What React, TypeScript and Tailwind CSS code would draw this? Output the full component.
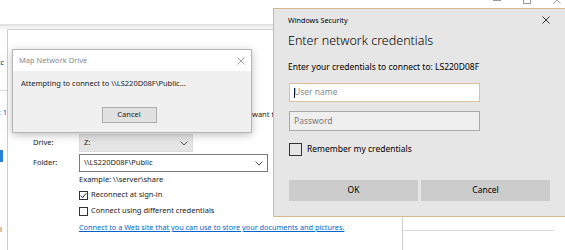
import React from 'react';

const font = { fontFamily: '"Noto Sans", "Open Sans", sans-serif' };

const Chevron = () => (
    <svg width="8" height="5" viewBox="0 0 8 5" className="shrink-0">
        <path d="M0.5 0.5 L4 4 L7.5 0.5" fill="none" stroke="#555" strokeWidth="1" />
    </svg>
);

const CheckBox = ({ checked }: { checked?: boolean }) => (
    <span className="w-[9px] h-[9px] border border-[#333] bg-white flex items-center justify-center shrink-0">
        {checked && (
            <svg width="7" height="7" viewBox="0 0 7 7">
                <path d="M0.8 3.6 L2.7 5.5 L6.2 1.2" fill="none" stroke="#222" strokeWidth="1" />
            </svg>
        )}
    </span>
);

const MapDriveWindow = () => (
    <div className="absolute left-[7px] top-[29px] w-[396px] h-[240px] bg-white border border-[#cfcfcf] text-[7.5px] text-[#1a1a1a]">
        <div className="mt-[79px] ml-[244px] w-[22px] overflow-hidden whitespace-nowrap leading-[10px]">want to</div>
        <div className="flex flex-col pl-[25px] pt-[15px]">
            <div className="flex items-center h-[18px]">
                <span className="w-[46px]">Drive:</span>
                <div className="w-[114px] h-[18px] bg-[#e5e5e5] border border-[#dcdcdc] flex items-center justify-between px-[4px]">
                    <span>Z:</span>
                    <Chevron />
                </div>
            </div>
            <div className="flex items-center h-[18px] mt-[2px]">
                <span className="w-[46px]">Folder:</span>
                <div className="w-[189px] h-[18px] bg-white border border-[#7a7a7a] flex items-center justify-between px-[4px]">
                    <span>\\LS220D08F\Public</span>
                    <Chevron />
                </div>
            </div>
            <div className="pl-[46px] mt-[1px] flex flex-col gap-[4px]">
                <span className="h-[12px] leading-[12px]">Example: \\server\share</span>
                <label className="flex items-center gap-[3px] h-[12px]">
                    <CheckBox checked />
                    <span>Reconnect at sign-in</span>
                </label>
                <label className="flex items-center gap-[3px] h-[12px]">
                    <CheckBox />
                    <span>Connect using different credentials</span>
                </label>
                <a className="text-[#0066cc] underline whitespace-nowrap h-[12px] leading-[12px] text-[7.3px]">
                    Connect to a Web site that you can use to store your documents and pictures.
                </a>
            </div>
        </div>
    </div>
);

const ProgressDialog = () => (
    <div className="absolute left-[12px] top-[49px] w-[240px] h-[84px] bg-[#f0f0f0] border border-[#b5b5b5] shadow-[0_2px_8px_rgba(0,0,0,0.25)] flex flex-col text-[7.5px]">
        <div className="h-[21px] bg-white flex items-center justify-between pl-[6px] pr-[6px] text-[#8a8a8a]">
            <span>Map Network Drive</span>
            <svg width="8" height="8" viewBox="0 0 8 8">
                <path d="M0.5 0.5 L7.5 7.5 M7.5 0.5 L0.5 7.5" stroke="#999" strokeWidth="0.9" />
            </svg>
        </div>
        <div className="pl-[8px] pt-[7px] text-[#1a1a1a] whitespace-nowrap leading-[10px]">
            Attempting to connect to \\LS220D08F\Public...
        </div>
        <div className="flex justify-center mt-[19px] pr-[6px]">
            <button className="w-[55px] h-[16px] bg-[#e1e1e1] border border-[#adadad] text-[7.5px] text-[#1a1a1a]">
                Cancel
            </button>
        </div>
    </div>
);

const SecurityDialog = () => (
    <div className="absolute left-[273px] top-[8px] w-[300px] h-[209px] bg-[#e6e6e6] border border-[#d8b88c] text-black">
        <div className="flex items-center justify-between h-[22px] pl-[14px] pr-[22px] text-[7.2px]">
            <span>Windows Security</span>
            <svg width="8" height="8" viewBox="0 0 8 8">
                <path d="M0.5 0.5 L7.5 7.5 M7.5 0.5 L0.5 7.5" stroke="#222" strokeWidth="0.9" />
            </svg>
        </div>
        <div className="pl-[14px] text-[12.5px] font-light leading-[20px]">Enter network credentials</div>
        <div className="pl-[14px] text-[8.5px] mt-[10px] leading-[12px]">Enter your credentials to connect to: LS220D08F</div>
        <div className="pl-[15px] mt-[10px] flex flex-col gap-[9px] w-[206px]">
            <div className="h-[19px] bg-white border border-[#d9c29c] flex items-center pl-[4px] text-[8.5px] text-[#8a8a8a]">
                <span className="w-[1px] h-[10px] bg-black mr-[-1px]" />
                <span>User name</span>
            </div>
            <div className="h-[20px] bg-[#efefef] border border-[#a9a9a9] flex items-center pl-[4px] text-[8.5px] text-[#7a7a7a]">
                Password
            </div>
        </div>
        <label className="pl-[15px] mt-[12px] flex items-center gap-[5px] text-[8.5px]">
            <span className="w-[13px] h-[13px] border-[1.5px] border-[#333] bg-[#e6e6e6]" />
            <span>Remember my credentials</span>
        </label>
        <div className="pl-[15px] mt-[24px] flex gap-[3px] text-[8.5px]">
            <button className="w-[129px] h-[21px] bg-[#cccccc]">OK</button>
            <button className="w-[129px] h-[21px] bg-[#cccccc]">Cancel</button>
        </div>
    </div>
);

export default function App() {
    return (
        <div className="relative w-[565px] h-[250px] bg-white overflow-hidden" style={font}>
            {/* background window edge */}
            <div className="absolute left-0 top-[24px] w-[565px] h-[2px] bg-[#e2e2e2]" />
            <div className="absolute left-0 top-[26px] w-[565px] h-[3px] bg-[#f3f3f3]" />
            <div className="absolute left-0 top-[90px] w-[7px] h-px bg-[#dadada]" />
            <span className="absolute left-[-3px] top-[57px] text-[7.5px] text-[#333]">cc</span>
            <span className="absolute left-[-2px] top-[107px] text-[7.5px] text-[#0066cc]">t 1</span>
            <div className="absolute left-0 top-[150px] w-[3px] h-[12px] bg-[#2a7fd6]" />
            <span className="absolute left-[-2px] top-[224px] text-[7.5px] text-[#555]">il</span>

            {/* window controls of the window behind */}
            <div className="absolute right-0 top-[-4px] flex items-center gap-[22px] pr-[4px] text-[#888]">
                <div className="w-[8px] h-px bg-[#999]" />
                <div className="w-[8px] h-[8px] border border-[#999]" />
                <svg width="8" height="8" viewBox="0 0 8 8">
                    <path d="M0.5 0.5 L7.5 7.5 M7.5 0.5 L0.5 7.5" stroke="#999" strokeWidth="0.9" />
                </svg>
            </div>
            <div className="absolute left-[402px] top-[230px] w-[153px] h-px bg-[#dddddd]" />

            <MapDriveWindow />
            <ProgressDialog />
            <SecurityDialog />
        </div>
    );
}
